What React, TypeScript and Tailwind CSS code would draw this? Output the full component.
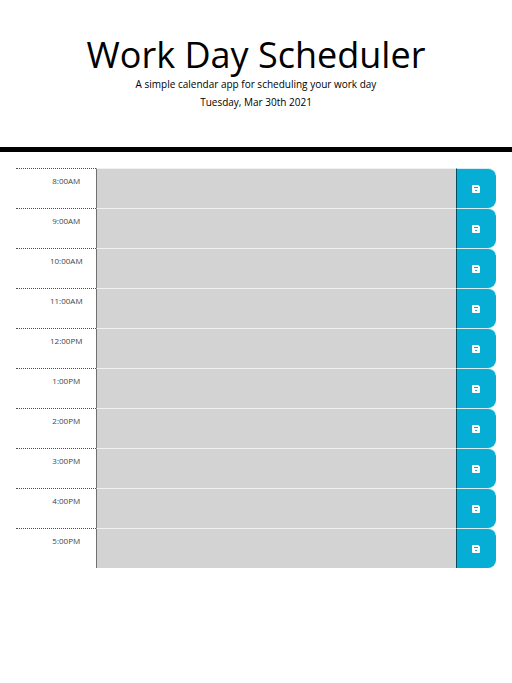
import React from "react";

const hours = ["8:00AM", "9:00AM", "10:00AM", "11:00AM", "12:00PM", "1:00PM", "2:00PM", "3:00PM", "4:00PM", "5:00PM"];

function SaveIcon() {
  return (
    <svg viewBox="0 0 8 8" className="size-2" fill="currentColor">
      <path fillRule="evenodd" d="M1 0h5.2L8 1.8V7a1 1 0 0 1-1 1H1a1 1 0 0 1-1-1V1a1 1 0 0 1 1-1ZM2 2v1h4V2ZM3 5v1h2V5Z" />
    </svg>
  );
}

export default function App() {
  return (
    <div className="min-h-screen bg-white font-['Open_Sans',sans-serif] text-black">
      <header className="flex h-[152px] flex-col items-center border-b-[5px] border-black pt-[34px] text-center">
        <h1 className="h-[41px] text-[36px] leading-[42px]">Work Day Scheduler</h1>
        <p className="text-[10px] leading-[18px]">A simple calendar app for scheduling your work day</p>
        <p className="text-[10px] leading-[18px]">Tuesday, Mar 30th 2021</p>
      </header>
      <main className="px-4 pt-4">
        {hours.map((hour) => (
          <div key={hour} className="flex h-10">
            <div className="flex w-20 justify-center border-t border-dotted border-[#505050] pt-1.5 pl-[20.5px] text-[8px] leading-3 text-[#444]">{hour}</div>
            <div className="w-[360px] border-t border-l border-t-[#f0f0f0] border-l-[#707070] bg-[#d3d3d3]" />
            <button className="flex w-10 items-center justify-center rounded-r-[8px] border-t border-l border-t-[#d5eef5] border-l-[#064e60] bg-[#06aed5] pr-px text-white">
              <SaveIcon />
            </button>
          </div>
        ))}
      </main>
    </div>
  );
}
